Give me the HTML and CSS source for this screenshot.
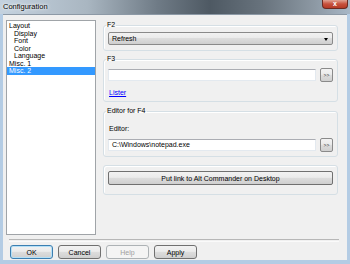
FILE: index.html
```html
<!DOCTYPE html>
<html lang="en">
<head>
    <meta charset="UTF-8">
    <title>Configuration</title>
    <link rel="stylesheet" href="styles.css">
</head>
<body>
    <div class="window">
        <div class="titlebar">
            <span class="title">Configuration</span>
            <span class="close">x</span>
        </div>
        <div class="client">
            <div class="main">
                <ul class="tree">
                    <li>Layout</li>
                    <li class="sub">Display</li>
                    <li class="sub">Font</li>
                    <li class="sub">Color</li>
                    <li class="sub">Language</li>
                    <li>Misc. 1</li>
                    <li class="selected">Misc. 2</li>
                </ul>
                <div class="pages">
                    <fieldset class="group group-f2">
                        <legend>F2</legend>
                        <div class="select">Refresh<span class="arrow"></span></div>
                    </fieldset>
                    <fieldset class="group group-f3">
                        <legend>F3</legend>
                        <div class="row">
                            <div class="input"></div>
                            <button class="browse">&gt;&gt;</button>
                        </div>
                        <a class="link" href="#">Lister</a>
                    </fieldset>
                    <fieldset class="group group-f4">
                        <legend>Editor for F4</legend>
                        <div class="label">Editor:</div>
                        <div class="row">
                            <div class="input">C:\Windows\notepad.exe</div>
                            <button class="browse">&gt;&gt;</button>
                        </div>
                    </fieldset>
                    <fieldset class="group group-link">
                        <button class="wide">Put link to Alt Commander on Desktop</button>
                    </fieldset>
                </div>
            </div>
            <div class="separator"></div>
            <div class="actions">
                <button class="btn default">OK</button>
                <button class="btn">Cancel</button>
                <button class="btn" disabled>Help</button>
                <button class="btn">Apply</button>
            </div>
        </div>
    </div>
</body>
</html>
```

FILE: styles.css
```css
body {
    margin: 0;
    font-family: 'Liberation Sans', Arial, sans-serif;
    font-size: 7px;
    color: #000;
    background: #b4cce4;
}
.window {
    width: 350px;
    height: 264px;
    display: flex;
    flex-direction: column;
    overflow: hidden;
}
.titlebar {
    height: 14px;
    flex: none;
    display: flex;
    justify-content: space-between;
    align-items: flex-start;
    background: linear-gradient(to right, #c4d2df 0%, #a9b6c1 25%, #6f7b86 45%, #4e5963 60%, #68737d 75%, #8d99a4 90%, #a8b7c6 100%);
}
.title {
    margin: 2px 0 0 3px;
    font-size: 7.5px;
    line-height: 9px;
    color: #000;
    text-shadow: 0 0 4px #fff, 0 0 2px #fff;
}
.close {
    width: 26px;
    height: 9px;
    margin-right: 2px;
    border: 1px solid #6b2a22;
    border-top: none;
    border-radius: 0 0 4px 4px;
    background: linear-gradient(#e0a394, #c7503c 50%, #b53a26);
    color: #fff;
    font-size: 7px;
    font-weight: bold;
    line-height: 8px;
    text-align: center;
    box-sizing: border-box;
}
.client {
    flex: none;
    height: 246px;
    margin: 0 3px;
    padding: 5px 0 0 3px;
    box-sizing: border-box;
    background: #f0f0f0;
    border-top: 1px solid #8c99a6;
}
.main {
    display: flex;
    height: 215px;
}
.tree {
    list-style: none;
    margin: 0;
    padding: 1px 0 0;
    width: 90px;
    box-sizing: border-box;
    border: 1px solid #a0a4a8;
    background: #fff;
}
.tree li {
    height: 7.5px;
    line-height: 7.5px;
    padding-left: 2px;
}
.tree li.sub {
    padding-left: 7px;
}
.tree li.selected {
    background: #3399ff;
    color: #fff;
}
.pages {
    margin-left: 7px;
    width: 235px;
    display: flex;
    flex-direction: column;
}
.group {
    margin: 0;
    min-width: 0;
    border: 1px solid #d5dfe5;
    border-radius: 3px;
    padding: 0 4px;
    box-shadow: inset 1px 1px 0 #fff;
}
.group legend {
    padding: 0 1px;
    margin-left: -2px;
    line-height: 10px;
}
.group-f2 {
    padding-top: 2px;
    padding-bottom: 5px;
}
.group-f3 {
    margin-top: 3px;
    padding-top: 4px;
    padding-bottom: 3px;
}
.group-f4 {
    margin-top: 4px;
    padding-top: 4px;
    padding-bottom: 4px;
}
.group-link {
    margin-top: 8px;
    padding-top: 5px;
    padding-bottom: 9px;
}
.select {
    position: relative;
    height: 13px;
    line-height: 12px;
    padding-left: 3px;
    box-sizing: border-box;
    border: 1px solid #8a8a8a;
    border-radius: 2px;
    background: linear-gradient(#f2f2f2 0%, #ebebeb 45%, #dddddd 50%, #cfcfcf 100%);
}
.arrow {
    position: absolute;
    right: 4px;
    top: 5px;
    border-left: 2px solid transparent;
    border-right: 2px solid transparent;
    border-top: 3px solid #000;
}
.row {
    display: flex;
    align-items: flex-start;
    gap: 4px;
}
.input {
    flex: 1;
    height: 12px;
    margin-top: 1px;
    line-height: 10px;
    padding-left: 3px;
    box-sizing: border-box;
    background: #fff;
    border: 1px solid #e3e9ef;
    border-top-color: #abadb3;
    white-space: nowrap;
}
.browse {
    width: 13px;
    height: 14px;
    padding: 0;
    margin: 0;
    font-family: inherit;
    font-size: 5px;
    line-height: 10px;
    color: #333;
    border: 1px solid #8a8a8a;
    border-radius: 2px;
    background: linear-gradient(#f2f2f2 0%, #ebebeb 45%, #dddddd 50%, #cfcfcf 100%);
}
.link {
    display: block;
    margin-top: 6px;
    line-height: 10px;
    padding-left: 1px;
    color: #0000ff;
    text-decoration: underline;
}
.label {
    margin-top: 4px;
    line-height: 10px;
    margin-bottom: 4px;
    padding-left: 1px;
}
.wide {
    display: block;
    width: 100%;
    height: 14px;
    padding: 0;
    font-family: inherit;
    font-size: 7px;
    color: #000;
    border: 1px solid #707070;
    border-radius: 2px;
    background: linear-gradient(#f2f2f2 0%, #ebebeb 45%, #dddddd 50%, #cfcfcf 100%);
}
.separator {
    margin: 4px 8px 0 3px;
    height: 1px;
    border-top: 1px solid #a0a0a0;
    border-bottom: 1px solid #fff;
    opacity: 0.7;
}
.actions {
    display: flex;
    gap: 5px;
    margin-top: 3px;
    padding-left: 4px;
}
.btn {
    width: 43px;
    height: 14px;
    padding: 0;
    font-family: inherit;
    font-size: 7px;
    color: #000;
    border: 1px solid #707070;
    border-radius: 3px;
    background: linear-gradient(#f2f2f2 0%, #ebebeb 45%, #dddddd 50%, #cfcfcf 100%);
}
.btn.default {
    border-color: #3c7fb1;
    box-shadow: inset 0 0 0 1px #b5e0f7;
}
.btn:disabled {
    color: #a0a0a0;
    border-color: #adb2b5;
    background: #f4f4f4;
}
```
